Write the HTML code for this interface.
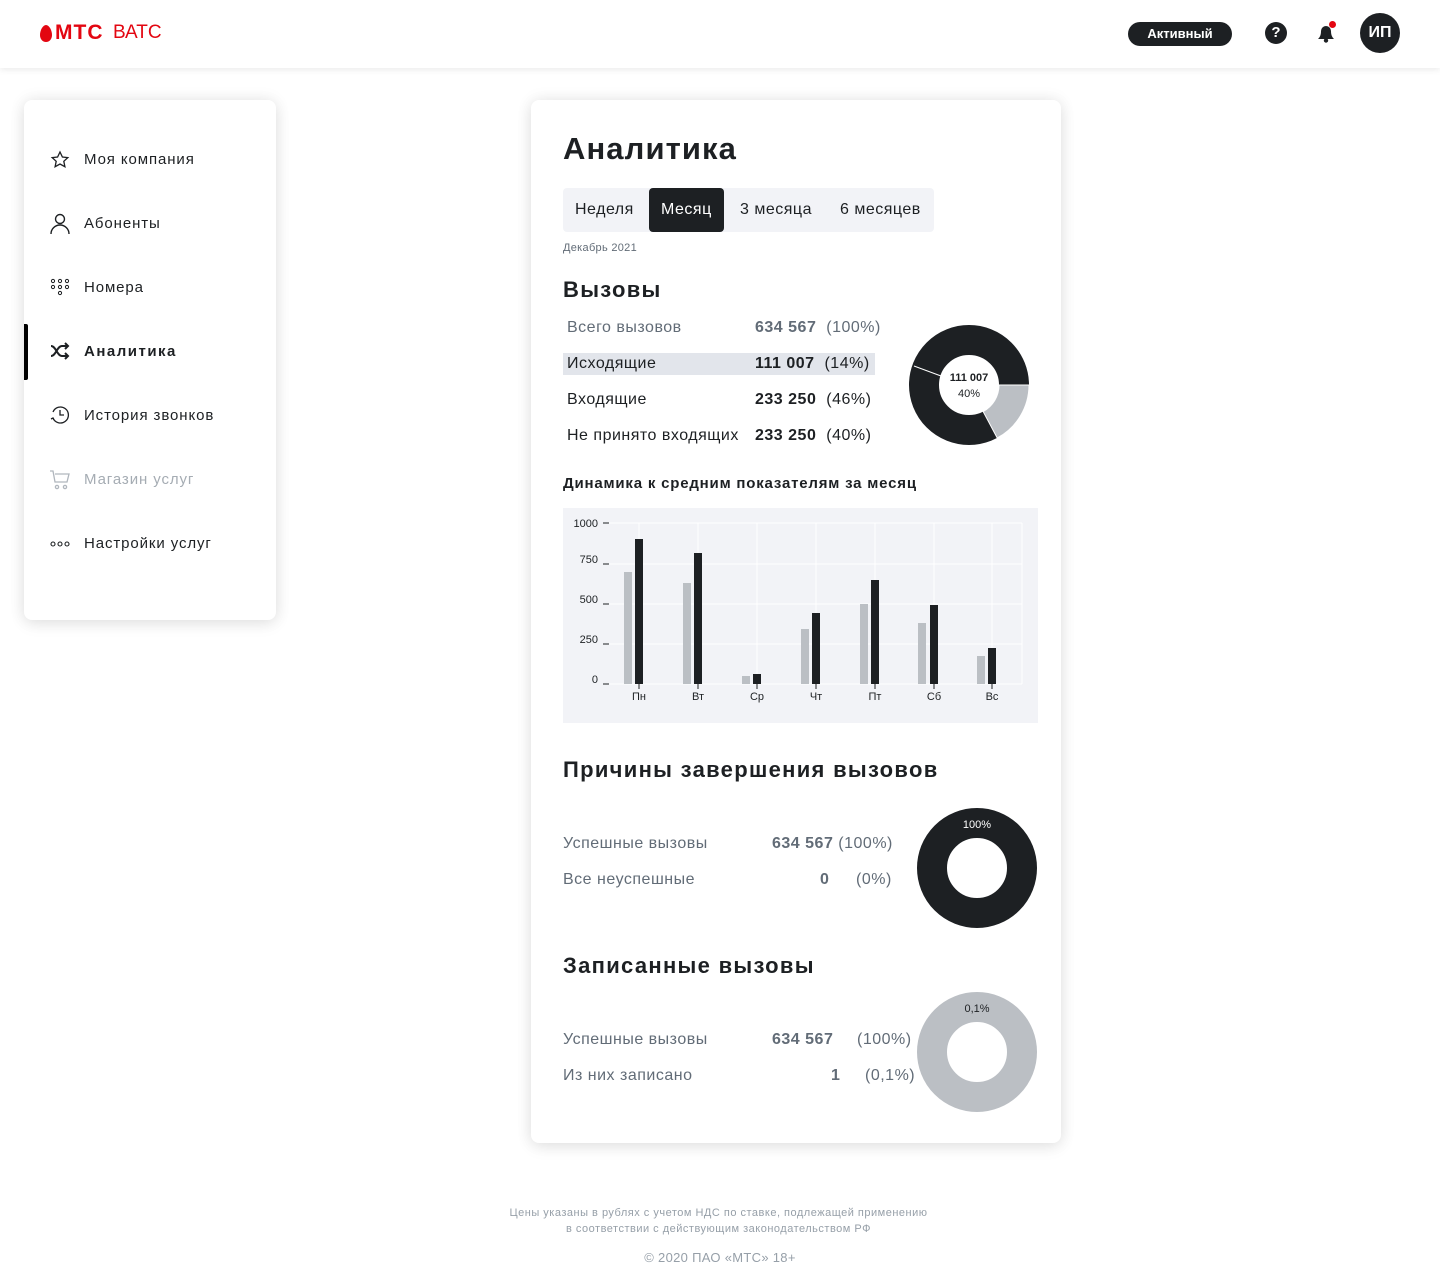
<!DOCTYPE html>
<html><head><meta charset="utf-8">
<style>
*{margin:0;padding:0;box-sizing:border-box}
body{width:1440px;height:1281px;background:#fff;font-family:"Liberation Sans","Noto Sans CJK SC",sans-serif;color:#1d2023;position:relative;overflow:hidden}
.a{position:absolute;white-space:nowrap}
.hdr{position:absolute;left:0;top:0;width:1440px;height:68px;background:#fff;box-shadow:0 2px 6px rgba(0,0,0,.08)}
.card{position:absolute;background:#fff;border-radius:8px;box-shadow:0 0 16px rgba(0,0,0,.08),0 4px 16px rgba(0,0,0,.08)}
.nav{font-size:15px;line-height:20px;letter-spacing:0.9px}
.g{color:#626c77}
.t{font-size:16px;line-height:22px;letter-spacing:0.5px}
.h{font-size:22px;font-weight:700;line-height:28px;letter-spacing:1.3px}
b{font-weight:700}
</style></head><body>
<div class="hdr"></div>
<svg class="a" style="left:40px;top:25px" width="12" height="17" viewBox="0 0 12 17"><path d="M6 0C3 0 0 5 0 10c0 4 2.5 7 6 7s6-3 6-7C12 5 9 0 6 0z" fill="#e30611"/></svg>
<div class="a" style="left:55px;top:21px;font-size:21px;font-weight:700;color:#e30611;line-height:24px;letter-spacing:1px">МТС</div>
<div class="a" style="left:113px;top:22px;font-size:19px;color:#e30611;line-height:22px">ВАТС</div>
<div class="a" style="left:1128px;top:22px;width:104px;height:24px;border-radius:12px;background:#1d2023;color:#fff;font-size:13px;font-weight:700;text-align:center;line-height:24px">Активный</div>
<div class="a" style="left:1265px;top:22px;width:22px;height:22px;border-radius:50%;background:#1d2023;color:#fff;font-size:15px;font-weight:700;text-align:center;line-height:22px">?</div>
<svg class="a" style="left:1315px;top:20px" width="24" height="24" viewBox="0 0 24 24"><path d="M3 19c2-2 3-4 3-8a5 5 0 0 1 10 0c0 4 1 6 3 8z" fill="#1d2023"/><circle cx="11" cy="20.5" r="2.2" fill="#1d2023"/><circle cx="17.5" cy="4.5" r="3.5" fill="#e30611"/></svg>
<div class="a" style="left:1360px;top:13px;width:40px;height:40px;border-radius:50%;background:#1d2023;color:#fff;font-size:16px;font-weight:700;text-align:center;line-height:40px">ИП</div>

<div class="card" style="left:24px;top:100px;width:252px;height:520px"></div>
<div class="a" style="left:24px;top:324px;width:4px;height:56px;background:#000;border-radius:0 2px 2px 0"></div>
<svg class="a" style="left:50px;top:150px" width="20" height="20" viewBox="0 0 20 20" fill="none" stroke="#1d2023" stroke-width="1.3"><path d="M10 2l2.4 5 5.4.6-4 3.7 1.1 5.4L10 14l-4.9 2.7 1.1-5.4-4-3.7 5.4-.6z"/></svg>
<div class="a nav" style="left:84px;top:150px">Моя компания</div>
<svg class="a" style="left:50px;top:213px" width="20" height="22" viewBox="0 0 20 22" fill="none" stroke="#1d2023" stroke-width="1.4"><circle cx="10" cy="6" r="4.5"/><path d="M1 21c0-5 4-9 9-9s9 4 9 9"/></svg>
<div class="a nav" style="left:84px;top:214px">Абоненты</div>
<svg class="a" style="left:50px;top:278px" width="20" height="20" viewBox="0 0 20 20" fill="none" stroke="#1d2023" stroke-width="1"><circle cx="3" cy="3" r="1.6"/><circle cx="10" cy="3" r="1.6"/><circle cx="17" cy="3" r="1.6"/><circle cx="3" cy="9" r="1.6"/><circle cx="10" cy="9" r="1.6"/><circle cx="17" cy="9" r="1.6"/><circle cx="10" cy="15" r="1.6"/></svg>
<div class="a nav" style="left:84px;top:278px">Номера</div>
<svg class="a" style="left:49px;top:342px" width="22" height="18" viewBox="0 0 22 18" fill="none" stroke="#1d2023" stroke-width="2"><path d="M2 4c5 0 6 10 11 10h6M2 14c5 0 6-10 11-10h6M16 1l3 3-3 3M16 11l3 3-3 3"/></svg>
<div class="a nav" style="left:84px;top:342px;font-weight:700;letter-spacing:1.5px">Аналитика</div>
<svg class="a" style="left:50px;top:405px" width="20" height="20" viewBox="0 0 20 20" fill="none" stroke="#1d2023" stroke-width="1.3"><path d="M3 13a8 8 0 1 0 0-6"/><path d="M10 5v5h4"/><path d="M1 14l2-1 1 2"/></svg>
<div class="a nav" style="left:84px;top:406px">История звонков</div>
<svg class="a" style="left:49px;top:469px" width="22" height="22" viewBox="0 0 22 22" fill="none" stroke="#b0b6bd" stroke-width="1.3"><path d="M1 2h3l2 11h12l2-8H6"/><circle cx="8" cy="18" r="1.6"/><circle cx="16" cy="18" r="1.6"/></svg>
<div class="a nav" style="left:84px;top:470px;color:#a5acb3">Магазин услуг</div>
<svg class="a" style="left:50px;top:540px" width="20" height="8" viewBox="0 0 20 8" fill="none" stroke="#1d2023" stroke-width="1.1"><circle cx="3" cy="4" r="2"/><circle cx="10" cy="4" r="2"/><circle cx="17" cy="4" r="2"/></svg>
<div class="a nav" style="left:84px;top:534px">Настройки услуг</div>

<div class="card" style="left:531px;top:100px;width:530px;height:1043px"></div>
<div class="a" style="left:563px;top:130px;font-size:31px;font-weight:700;line-height:38px;letter-spacing:1.1px">Аналитика</div>
<div class="a" style="left:563px;top:188px;width:371px;height:44px;background:#f2f3f7;border-radius:4px"></div>
<div class="a" style="left:649px;top:188px;width:75px;height:44px;background:#1d2023;border-radius:4px"></div>
<div class="a t" style="left:575px;top:199px">Неделя</div>
<div class="a t" style="left:661px;top:199px;color:#fff">Месяц</div>
<div class="a t" style="left:740px;top:199px">3 месяца</div>
<div class="a t" style="left:840px;top:199px">6 месяцев</div>
<div class="a" style="left:563px;top:240px;font-size:11px;line-height:16px;color:#626c77;letter-spacing:0.3px">Декабрь 2021</div>

<div class="a h" style="left:563px;top:276px">Вызовы</div>
<div class="a" style="left:563px;top:353px;width:312px;height:22px;background:#e2e5eb"></div>
<div class="a g t" style="left:567px;top:317px">Всего вызовов</div>
<div class="a g t" style="left:755px;top:317px"><b>634 567</b>&nbsp; (100%)</div>
<div class="a t" style="left:567px;top:353px">Исходящие</div>
<div class="a t" style="left:755px;top:353px"><b>111 007</b>&nbsp; (14%)</div>
<div class="a t" style="left:567px;top:389px">Входящие</div>
<div class="a t" style="left:755px;top:389px"><b>233 250</b>&nbsp; (46%)</div>
<div class="a t" style="left:567px;top:425px">Не принято входящих</div>
<div class="a t" style="left:755px;top:425px"><b>233 250</b>&nbsp; (40%)</div>

<svg class="a" style="left:900px;top:316px" width="140" height="140" viewBox="900 316 140 140">
<circle cx="969" cy="385" r="45" fill="none" stroke="#1d2023" stroke-width="30"/>
<path d="M1029 385A60 60 0 0 1 997.2 438L983.1 411.5A30 30 0 0 0 999 385z" fill="#bbbfc4" stroke="#fff" stroke-width="1"/>
<line x1="941" y1="376" x2="914" y2="366" stroke="#fff" stroke-width="1"/>
<text x="969" y="381" text-anchor="middle" font-size="11" font-weight="700" fill="#1d2023" font-family="Liberation Sans">111 007</text>
<text x="969" y="397" text-anchor="middle" font-size="11" fill="#1d2023" font-family="Liberation Sans">40%</text>
</svg>

<div class="a" style="left:563px;top:474px;font-size:15px;font-weight:700;line-height:20px;letter-spacing:0.8px">Динамика к средним показателям за месяц</div>

<svg class="a" style="left:563px;top:508px" width="475" height="215" viewBox="563 508 475 215" font-family="Liberation Sans" font-size="11" fill="#1d2023">
<rect x="563" y="508" width="475" height="215" fill="#f2f3f7"/>
<g stroke="#fff" stroke-width="1">
<line x1="609" y1="523" x2="1022" y2="523"/><line x1="609" y1="564" x2="1022" y2="564"/><line x1="609" y1="604" x2="1022" y2="604"/><line x1="609" y1="644" x2="1022" y2="644"/><line x1="609" y1="684" x2="1022" y2="684"/>
<line x1="639" y1="523" x2="639" y2="684"/><line x1="698" y1="523" x2="698" y2="684"/><line x1="757" y1="523" x2="757" y2="684"/><line x1="816" y1="523" x2="816" y2="684"/><line x1="875" y1="523" x2="875" y2="684"/><line x1="934" y1="523" x2="934" y2="684"/><line x1="992" y1="523" x2="992" y2="684"/><line x1="1022" y1="523" x2="1022" y2="684"/>
</g>
<g stroke="#1d2023" stroke-width="1">
<line x1="603" y1="523" x2="609" y2="523"/><line x1="603" y1="564" x2="609" y2="564"/><line x1="603" y1="604" x2="609" y2="604"/><line x1="603" y1="644" x2="609" y2="644"/><line x1="603" y1="684" x2="609" y2="684"/>
<line x1="639" y1="684" x2="639" y2="689"/><line x1="698" y1="684" x2="698" y2="689"/><line x1="757" y1="684" x2="757" y2="689"/><line x1="816" y1="684" x2="816" y2="689"/><line x1="875" y1="684" x2="875" y2="689"/><line x1="934" y1="684" x2="934" y2="689"/><line x1="992" y1="684" x2="992" y2="689"/>
</g>
<g text-anchor="end"><text x="598" y="527">1000</text><text x="598" y="563">750</text><text x="598" y="603">500</text><text x="598" y="643">250</text><text x="598" y="683">0</text></g>
<g fill="#bbbfc4"><rect x="624" y="572" width="8" height="112"/><rect x="683" y="583" width="8" height="101"/><rect x="742" y="676" width="8" height="8"/><rect x="801" y="629" width="8" height="55"/><rect x="860" y="604" width="8" height="80"/><rect x="918" y="623" width="8" height="61"/><rect x="977" y="656" width="8" height="28"/></g>
<g fill="#1d2023"><rect x="635" y="539" width="8" height="145"/><rect x="694" y="553" width="8" height="131"/><rect x="753" y="674" width="8" height="10"/><rect x="812" y="613" width="8" height="71"/><rect x="871" y="580" width="8" height="104"/><rect x="930" y="605" width="8" height="79"/><rect x="988" y="648" width="8" height="36"/></g>
<g text-anchor="middle"><text x="639" y="700">Пн</text><text x="698" y="700">Вт</text><text x="757" y="700">Ср</text><text x="816" y="700">Чт</text><text x="875" y="700">Пт</text><text x="934" y="700">Сб</text><text x="992" y="700">Вс</text></g>
</svg>

<div class="a h" style="left:563px;top:756px">Причины завершения вызовов</div>
<div class="a g t" style="left:563px;top:833px">Успешные вызовы</div>
<div class="a g t" style="left:772px;top:833px"><b>634 567</b> (100%)</div>
<div class="a g t" style="left:563px;top:869px">Все неуспешные</div>
<div class="a g t" style="left:820px;top:869px"><b>0</b></div>
<div class="a g t" style="left:856px;top:869px">(0%)</div>
<svg class="a" style="left:917px;top:808px" width="120" height="120" viewBox="0 0 120 120"><circle cx="60" cy="60" r="45" fill="none" stroke="#1d2023" stroke-width="30"/><text x="60" y="20" text-anchor="middle" font-size="11" fill="#fff" font-family="Liberation Sans">100%</text></svg>

<div class="a h" style="left:563px;top:952px">Записанные вызовы</div>
<div class="a g t" style="left:563px;top:1029px">Успешные вызовы</div>
<div class="a g t" style="left:772px;top:1029px"><b>634 567</b></div>
<div class="a g t" style="left:857px;top:1029px">(100%)</div>
<div class="a g t" style="left:563px;top:1065px">Из них записано</div>
<div class="a g t" style="left:831px;top:1065px"><b>1</b></div>
<div class="a g t" style="left:865px;top:1065px">(0,1%)</div>
<svg class="a" style="left:917px;top:992px" width="120" height="120" viewBox="0 0 120 120"><circle cx="60" cy="60" r="45" fill="none" stroke="#bbbfc4" stroke-width="30"/><text x="60" y="20" text-anchor="middle" font-size="11" fill="#1d2023" font-family="Liberation Sans">0,1%</text></svg>

<div class="a" style="left:0;width:1437px;top:1205px;text-align:center;font-size:11px;line-height:16px;color:#969fa8;letter-spacing:0.5px">Цены указаны в рублях с учетом НДС по ставке, подлежащей применению<br>в соответствии с действующим законодательством РФ</div>
<div class="a" style="left:0;width:1440px;top:1249px;text-align:center;font-size:13px;line-height:18px;color:#969fa8;letter-spacing:0.3px">© 2020 ПАО «МТС» 18+</div>
</body></html>
